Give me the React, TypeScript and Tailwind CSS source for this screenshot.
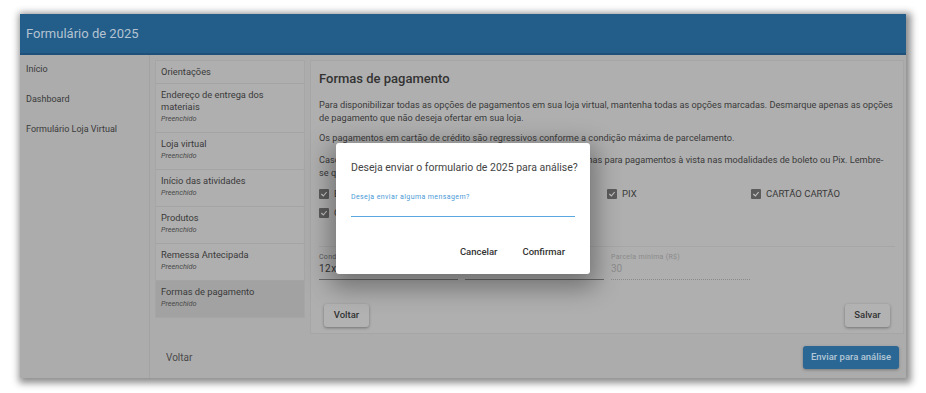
import React from "react";

const Check = () => (
  <span className="w-[10px] h-[10px] bg-[#5c5c5c] rounded-[1px] flex items-center justify-center shrink-0">
    <svg width="8" height="8" viewBox="0 0 24 24" fill="none" stroke="#c4c4c4" strokeWidth="3.5">
      <polyline points="4 12 10 18 20 6" />
    </svg>
  </span>
);

const CheckItem = ({ label }: { label: string }) => (
  <div className="flex items-center gap-[5px] h-[19px]">
    <Check />
    <span className="text-[9.5px] text-[#3a3a3a] leading-none">{label}</span>
  </div>
);

const listItems = [
  { t: "Endereço de entrega dos materiais" },
  { t: "Loja virtual" },
  { t: "Início das atividades" },
  { t: "Produtos" },
  { t: "Remessa Antecipada" },
];

export default function App() {
  return (
    <div className="w-[926px] h-[393px] bg-white pt-[14px] pl-[20px] font-['Roboto',sans-serif] overflow-hidden">
      <div className="relative w-[886px] h-[364px] flex flex-col bg-[#acacac] shadow-[2px_2px_7px_3px_rgba(0,0,0,0.45)]">
        {/* header */}
        <div className="h-[41px] bg-[#235d8a] border-b-2 border-[#1e5079] flex items-center px-[6px]">
          <span className="text-[13px] text-[#b3c3d1]">Formulário de 2025</span>
        </div>
        {/* body */}
        <div className="flex flex-1">
          <div className="w-[130px] border-r border-[#a2a2a2] flex flex-col text-[9px] text-[#3a3a3a]">
            <div className="h-[30px] flex items-center pl-[6px]">Início</div>
            <div className="h-[30px] flex items-center pl-[6px]">Dashboard</div>
            <div className="h-[30px] flex items-center pl-[6px]">Formulário Loja Virtual</div>
          </div>
          <div className="flex-1 flex flex-col pt-[5px] pl-[5px] pr-[2px]">
            <div className="flex gap-[5px]">
              {/* list */}
              <div className="w-[150px] self-start bg-[#afafaf] border border-[#a6a6a6] text-[#3a3a3a]">
                <div className="px-[5px] pt-[5px] pb-[5px] border-b border-[#a4a4a4] text-[9.3px] leading-[12px]">
                  Orientações
                </div>
                {listItems.map((it) => (
                  <div key={it.t} className="px-[5px] pt-[5px] pb-[7px] border-b border-[#a4a4a4]">
                    <div className="text-[9.3px] leading-[12px] pr-[20px]">{it.t}</div>
                    <div className="text-[7.3px] leading-[12px] italic text-[#4a4a4a]">Preenchido</div>
                  </div>
                ))}
                <div className="px-[5px] pt-[5px] pb-[7px] bg-[#a2a2a2]">
                  <div className="text-[9.3px] leading-[12px]">Formas de pagamento</div>
                  <div className="text-[7.3px] leading-[12px] italic text-[#4a4a4a]">Preenchido</div>
                </div>
              </div>
              {/* card */}
              <div className="flex-1 h-[274px] bg-[#afafaf] border border-[#a6a6a6] pl-[8px] pr-[4px] pt-[9px] flex flex-col text-[#3a3a3a]">
                <div className="text-[13px] leading-[18px] font-medium text-[#333]">Formas de pagamento</div>
                <p className="mt-[10px] text-[9.2px] leading-[13px]">
                  Para disponibilizar todas as opções de pagamentos em sua loja virtual, mantenha todas as opções marcadas. Desmarque apenas as opções de pagamento que não deseja ofertar em sua loja.
                </p>
                <p className="mt-[7px] text-[9.2px] leading-[13px]">
                  Os pagamentos em cartão de crédito são regressivos conforme a condição máxima de parcelamento.
                </p>
                <p className="mt-[9px] text-[9.2px] leading-[13px] whitespace-nowrap">
                  Caso deseje oferecer um desconto especial, ele será aplicado apenas para pagamentos à vista nas modalidades de boleto ou Pix. Lembre-
                  <br />
                  se que o desconto é opcional.
                </p>
                <div className="mt-[5px] grid grid-cols-4 pr-[4px]">
                  <CheckItem label="BOLETO" />
                  <CheckItem label="DÉBITO" />
                  <CheckItem label="PIX" />
                  <CheckItem label="CARTÃO CARTÃO" />
                  <CheckItem label="CRÉDITO" />
                </div>
                <div className="mt-[24px] mr-[4px] border-t border-[#a6a6a6] pt-[5px] flex gap-[7px]">
                  <div className="w-[139px] border-b border-[#6a6a6a] pb-[3px]">
                    <div className="text-[7px] leading-[10px] text-[#5a5a5a] tracking-[0.3px]">Condição máxima</div>
                    <div className="text-[10px] leading-[14px] text-[#333] tracking-[0.5px]">12x</div>
                  </div>
                  <div className="w-[139px] border-b border-[#6a6a6a] pb-[3px]">
                    <div className="text-[7px] leading-[10px] text-[#5a5a5a]">Desconto à vista (%)</div>
                    <div className="text-[10px] leading-[14px] text-[#333]">5</div>
                  </div>
                  <div className="w-[139px] border-b border-dotted border-[#8a8a8a] pb-[3px]">
                    <div className="text-[7px] leading-[10px] text-[#8a8a8a] tracking-[0.3px]">Parcela mínima (R$)</div>
                    <div className="text-[10px] leading-[14px] text-[#8c8c8c]">30</div>
                  </div>
                </div>
                <div className="mt-auto mb-[6px] flex justify-between pl-[5px] pr-[9px]">
                  <button className="w-[45px] h-[23px] bg-[#b2b2b2] rounded-[3px] shadow-[0_1px_3px_rgba(0,0,0,0.35)] text-[9.5px] font-medium text-[#333]">
                    Voltar
                  </button>
                  <button className="w-[45px] h-[23px] bg-[#b2b2b2] rounded-[3px] shadow-[0_1px_3px_rgba(0,0,0,0.35)] text-[9.5px] font-medium text-[#333]">
                    Salvar
                  </button>
                </div>
              </div>
            </div>
            {/* bottom bar */}
            <div className="flex-1 flex items-center justify-between pl-[11px] pr-[5px] pt-[3px]">
              <span className="text-[10px] text-[#4a4a4a]">Voltar</span>
              <button className="w-[96px] h-[23px] bg-[#2a6795] rounded-[3px] shadow-[0_1px_3px_rgba(0,0,0,0.3)] text-[9.5px] font-medium text-[#b5c7d6]">
                Enviar para análise
              </button>
            </div>
          </div>
        </div>

        {/* dialog */}
        <div className="absolute left-[316px] top-[129px] w-[254px] h-[131px] bg-white rounded-[3px] shadow-[0_8px_24px_6px_rgba(0,0,0,0.35)] flex flex-col px-[15px] pt-[17px] pb-[10px]">
          <div className="text-[10.5px] leading-[16px] text-[#444] whitespace-nowrap">Deseja enviar o formulario de 2025 para análise?</div>
          <div className="mt-[17px] text-[7px] leading-[9px] text-[#4a9ad6] tracking-[0.4px]">Deseja enviar alguma mensagem?</div>
          <div className="h-[15px] border-b-[1.5px] border-[#5aa8e0]"></div>
          <div className="mt-auto flex justify-end gap-[5px]">
            <button className="h-[24px] px-[10px] text-[9.5px] font-medium text-[#333]">Cancelar</button>
            <button className="h-[24px] px-[10px] text-[9.5px] font-medium text-[#333]">Confirmar</button>
          </div>
        </div>
      </div>
    </div>
  );
}
